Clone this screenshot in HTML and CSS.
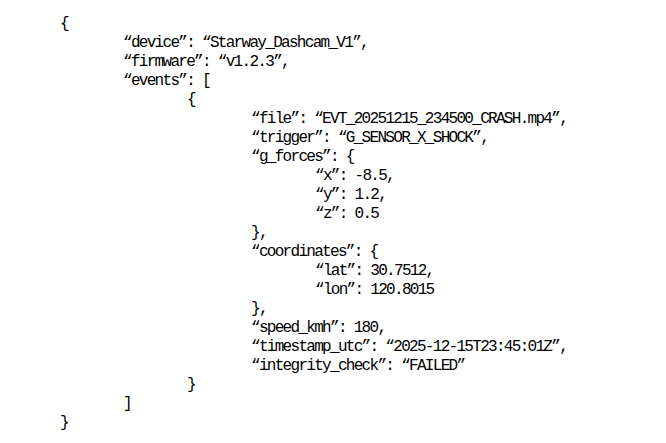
FILE: index.html
```html
<!DOCTYPE html>
<html>
<head>
<meta charset="utf-8">
<link rel="stylesheet" href="styles.css">
</head>
<body>
<div class="code">
<div class="ln l0">{</div>
<div class="ln l1">“device”: “Starway_Dashcam_V1”,</div>
<div class="ln l1">“firmware”: “v1.2.3”,</div>
<div class="ln l1">“events”: [</div>
<div class="ln l2">{</div>
<div class="ln l3">“file”: “EVT_20251215_234500_CRASH.mp4”,</div>
<div class="ln l3">“trigger”: “G_SENSOR_X_SHOCK”,</div>
<div class="ln l3">“g_forces”: {</div>
<div class="ln l4">“x”: -8.5,</div>
<div class="ln l4">“y”: 1.2,</div>
<div class="ln l4">“z”: 0.5</div>
<div class="ln l3">},</div>
<div class="ln l3">“coordinates”: {</div>
<div class="ln l4">“lat”: 30.7512,</div>
<div class="ln l4">“lon”: 120.8015</div>
<div class="ln l3">},</div>
<div class="ln l3">“speed_kmh”: 180,</div>
<div class="ln l3">“timestamp_utc”: “2025-12-15T23:45:01Z”,</div>
<div class="ln l3">“integrity_check”: “FAILED”</div>
<div class="ln l2">}</div>
<div class="ln l1">]</div>
<div class="ln l0">}</div>
</div>
</body>
</html>
```
FILE: styles.css
```css
html, body {
  margin: 0;
  padding: 0;
  background: #ffffff;
}
.code {
  padding: 15px 0 0 60px;
  font-family: "Liberation Mono", "DejaVu Sans Mono", monospace;
  font-size: 16px;
  letter-spacing: -1.7px;
  line-height: 19px;
  color: #000000;
}
.ln {
  height: 19px;
  white-space: pre;
}
.l1 { padding-left: 63px; }
.l2 { padding-left: 127px; }
.l3 { padding-left: 191px; }
.l4 { padding-left: 255px; }
```
